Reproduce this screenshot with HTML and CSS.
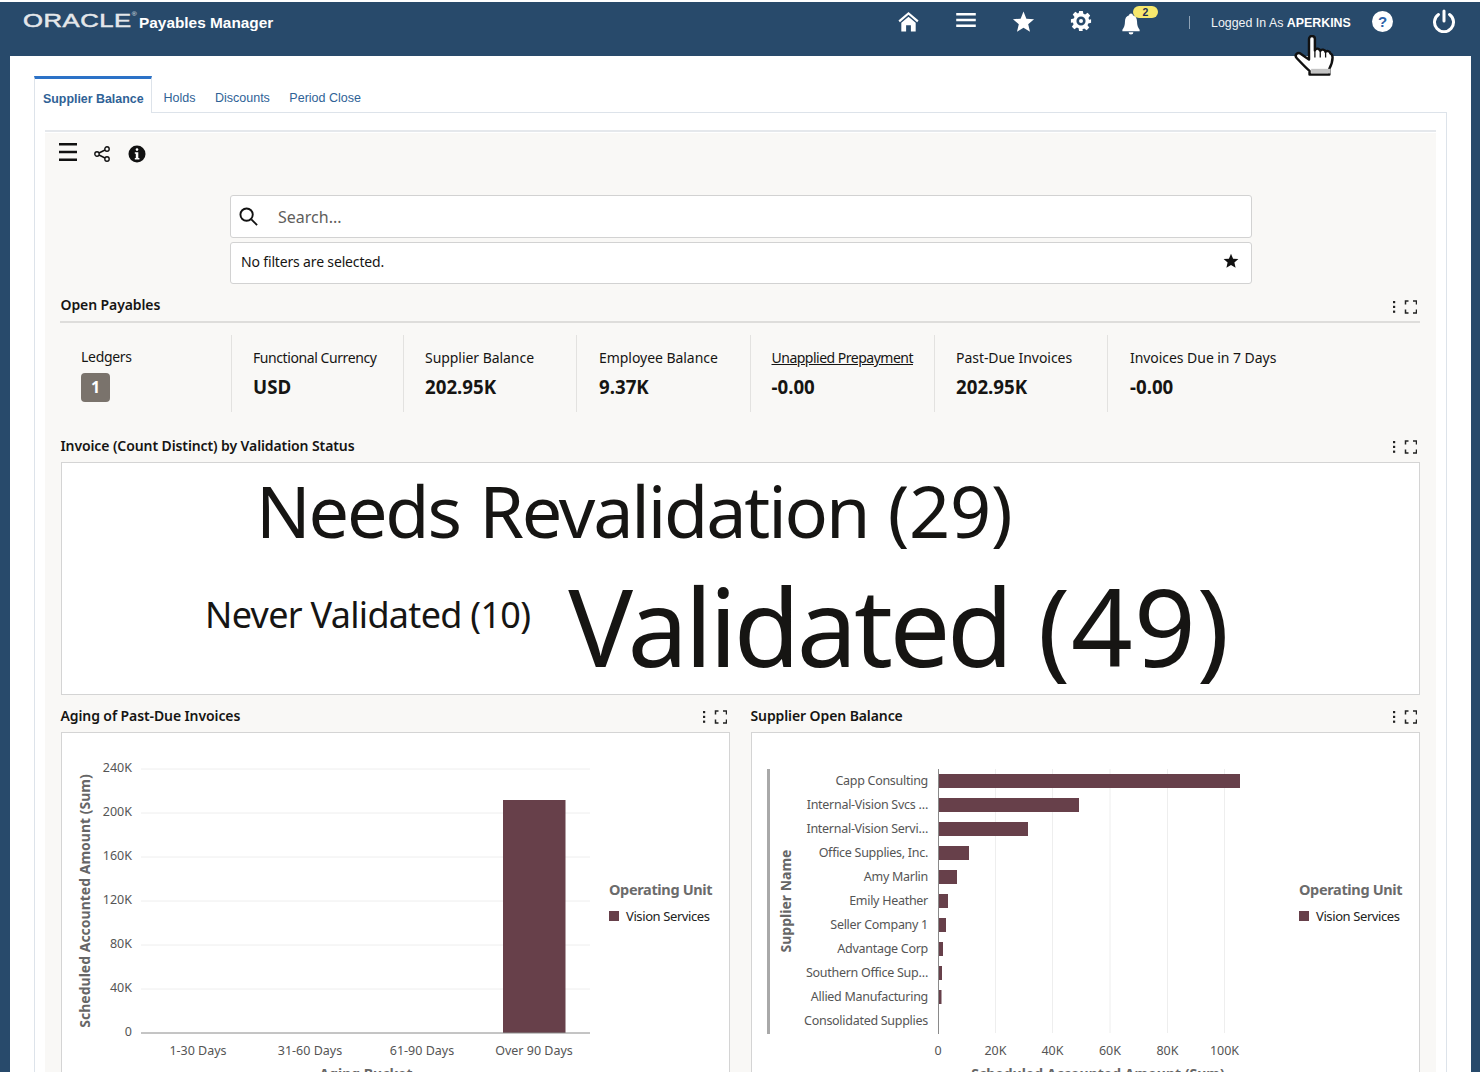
FILE: index.html
```html
<!DOCTYPE html>
<html lang="en">
<head>
<meta charset="utf-8">
<title>Payables Manager</title>
<link rel="stylesheet" href="styles.css">
</head>
<body>
<svg class="defs" width="0" height="0" aria-hidden="true">
  <symbol id="acts" viewBox="0 0 26 14">
    <g fill="#222"><rect x="2" y="1" width="2.200" height="2.200"/><rect x="2" y="5.800" width="2.200" height="2.200"/><rect x="2" y="10.600" width="2.200" height="2.200"/></g>
    <path d="M14.500 4.500V1h3M22 1h3.500v3.500M25.500 9.500V13H22M17.500 13h-3V9.500" fill="none" stroke="#222" stroke-width="1.500"/>
  </symbol>
</svg>
<header class="topbar">
  <div class="brand">
    <span class="logo">ORACLE<sup class="reg">®</sup></span>
    <span class="product">Payables Manager</span>
  </div>
  <nav class="tools">
    <svg class="ic i-home" viewBox="0 0 24 24"><path d="M1.500 11.500 12 2.500l10.500 9-1.500 1.700L12 5.500 3 13.200z" fill="#fff"/><path d="M4.500 13.800 12 7.500l7.500 6.300V23h-5v-6.500h-5V23h-5z" fill="#fff"/></svg>
    <svg class="ic i-menu" viewBox="0 0 24 18"><path d="M1 1h22v3H1zM1 7.500h22v3H1zM1 14h22v3H1z" fill="#fff"/></svg>
    <svg class="ic i-star" viewBox="0 0 24 24"><path d="m12 1.500 3 7.500 8 .6-6.100 5.200 1.900 7.900L12 18.400l-6.800 4.300 1.900-7.900L1 9.600l8-.6z" fill="#fff"/></svg>
    <svg class="ic i-gear" viewBox="0 0 24 24"><path fill="#fff" fill-rule="evenodd" d="M10 1h4l.6 3.200 1.900.8 2.700-1.900 2.800 2.800-1.900 2.700.8 1.900L23 10v4l-3.100.6-.8 1.900 1.900 2.700-2.800 2.800-2.700-1.900-1.900.8L13.900 23h-4l-.5-3.100-1.900-.8-2.700 1.900-2.800-2.800 1.900-2.700-.8-1.900L1 14v-4l3.100-.6.800-1.900L3 4.800 5.800 2l2.700 1.900 1-.6zM12 7a5 5 0 1 0 0 10 5 5 0 0 0 0-10z"/><circle cx="12" cy="12" r="2.200" fill="#fff"/></svg>
    <div class="bell">
      <svg class="ic i-bell" viewBox="0 0 20 24"><path d="M10 1.500c1.300 0 2 .9 2 2 3 .9 4.300 3.500 4.300 6.500 0 4 .9 6.500 2.700 8.500v1.500H1v-1.500C2.800 16.500 3.700 14 3.700 10c0-3 1.300-5.600 4.300-6.500 0-1.100.7-2 2-2zM7.500 21h5a2.500 2.500 0 0 1-5 0z" fill="#fff"/></svg>
      <span class="badge">2</span>
    </div>
    <span class="sep"></span>
    <span class="who">Logged In As <b>APERKINS</b></span>
    <span class="help">?</span>
    <svg class="ic i-power" viewBox="0 0 24 24"><path d="M12 2v10" stroke="#fff" stroke-width="3" stroke-linecap="round" fill="none"/><path d="M6.500 5.500a9.500 9.500 0 1 0 11 0" stroke="#fff" stroke-width="3" fill="none" stroke-linecap="round"/></svg>
  </nav>
  <svg class="hand" viewBox="0 0 42 40" preserveAspectRatio="none"><path d="M14 4c0-4 5.500-4 5.500 0v11c1-2.500 4.500-2 5 .5 1-2 4.500-1.500 5 1 1-1.600 4-1 4.500 1.500 1 .5 2 1.500 2 4 0 5-1.500 8-3 11v5.500H14.500v-3.500C11 32 7.500 28 2.500 22.500c-2.500-3 1-6.500 4-4L14 24z" fill="#fff" stroke="#111" stroke-width="2.300" stroke-linejoin="round"/><path d="M19.500 15v7M24.500 16v6M29.500 17v5" stroke="#111" stroke-width="1.200"/><path d="M16 33h18v4.500H16z" fill="#c4c4c4"/></svg>
</header>

<div class="frame">
<main class="sheet">
  <div class="tabs">
    <a class="tab on">Supplier Balance</a>
    <a class="tab">Holds</a>
    <a class="tab">Discounts</a>
    <a class="tab">Period Close</a>
  </div>
  <div class="panel">
    <div class="topline"></div>
    <div class="canvas">
      <div class="toolbar">
        <svg class="t-menu" viewBox="0 0 18 18"><path d="M0 0h18v2.400H0zM0 7.800h18v2.400H0zM0 15.600h18V18H0z" fill="#111"/></svg>
        <svg class="t-share" viewBox="0 0 16 16" fill="none" stroke="#111" stroke-width="1.400"><circle cx="3" cy="8" r="2.200"/><circle cx="13" cy="3" r="2.200"/><circle cx="13" cy="13" r="2.200"/><path d="m5 7 6-3M5 9l6 3"/></svg>
        <svg class="t-info" viewBox="0 0 18 18"><circle cx="9" cy="9" r="8.500" fill="#111"/><rect x="7.700" y="3.300" width="2.600" height="2.600" rx="1.300" fill="#fff"/><path d="M6.800 7.300h3.500v5.600h1.100v1.500H6.800v-1.500h1v-4.100h-1z" fill="#fff"/></svg>
      </div>
      <div class="filters">
        <div class="field search">
          <svg class="s-ic" viewBox="0 0 20 20" fill="none" stroke="#111" stroke-width="2"><circle cx="8" cy="8" r="6.500"/><path d="m13 13 6 6"/></svg>
          <span class="ph">Search...</span>
        </div>
        <div class="field filt">
          <span>No filters are selected.</span>
          <svg class="f-star" viewBox="0 0 16 16"><path d="m8 .8 2.100 4.900 5.300.4-4 3.500 1.200 5.200L8 12l-4.600 2.800 1.200-5.200-4-3.500 5.300-.4z" fill="#111"/></svg>
        </div>
      </div>

      <div class="sechead ruled">
        <h2>Open Payables</h2>
        <svg class="acts"><use href="#acts"/></svg>
      </div>
      <div class="kpis">
        <div class="kpi k1"><div class="lab up">Ledgers</div><div class="count">1</div></div>
        <div class="kpi k2"><div class="lab">Functional Currency</div><div class="val">USD</div></div>
        <div class="kpi k3"><div class="lab">Supplier Balance</div><div class="val">202.95K</div></div>
        <div class="kpi k4"><div class="lab">Employee Balance</div><div class="val">9.37K</div></div>
        <div class="kpi k5"><div class="lab link">Unapplied Prepayment</div><div class="val">-0.00</div></div>
        <div class="kpi k6"><div class="lab">Past-Due Invoices</div><div class="val">202.95K</div></div>
        <div class="kpi k7"><div class="lab">Invoices Due in 7 Days</div><div class="val">-0.00</div></div>
      </div>

      <div class="sechead">
        <h2>Invoice (Count Distinct) by Validation Status</h2>
        <svg class="acts"><use href="#acts"/></svg>
      </div>
      <div class="cloud">
        <div class="c-row r1"><span class="c-a">Needs Revalidation <span class="c-n">(29)</span></span></div>
        <div class="c-row r2"><span class="c-b">Never Validated (10)</span><span class="c-c">Validated <span class="c-n">(49)</span></span></div>
      </div>

      <div class="charts">
        <section class="chartcol">
          <div class="sechead">
            <h2>Aging of Past-Due Invoices</h2>
            <svg class="acts"><use href="#acts"/></svg>
          </div>
          <div class="chartbox">
            <svg class="chart" viewBox="62 733 667 349">
              <g class="grid">
                <path d="M141 769H590M141 813H590M141 857H590M141 901H590M141 945H590M141 989H590"/>
              </g>
              <rect class="bar" x="503" y="800" width="62.500" height="233"/>
              <path class="axis" d="M141 1033H590"/>
              <g class="tick end">
                <text x="132" y="772">240K</text><text x="132" y="816">200K</text><text x="132" y="860">160K</text><text x="132" y="904">120K</text><text x="132" y="948">80K</text><text x="132" y="992">40K</text><text x="132" y="1036">0</text>
              </g>
              <g class="tick mid">
                <text x="198" y="1055">1-30 Days</text><text x="310" y="1055">31-60 Days</text><text x="422" y="1055">61-90 Days</text><text x="534" y="1055">Over 90 Days</text>
              </g>
              <text class="atitle mid" transform="translate(90 901) rotate(-90)">Scheduled Accounted Amount (Sum)</text>
              <text class="atitle mid" x="366" y="1079">Aging Bucket</text>
              <text class="ltitle" x="609" y="895">Operating Unit</text>
              <rect class="bar" x="609" y="911" width="10" height="10"/>
              <text class="ltext" x="626" y="921">Vision Services</text>
            </svg>
          </div>
        </section>
        <section class="chartcol">
          <div class="sechead">
            <h2>Supplier Open Balance</h2>
            <svg class="acts"><use href="#acts"/></svg>
          </div>
          <div class="chartbox">
            <svg class="chart" viewBox="752 733 667 349">
              <path class="grid" d="M995.500 769V1033M1052.500 769V1033M1110 769V1033M1167.500 769V1033M1224.500 769V1033"/>
              <rect class="spine" x="767" y="769" width="3" height="265"/>
              <path class="axis" d="M938.500 769V1034"/>
              <g class="bars">
                <rect class="bar" x="939" y="774" width="301" height="14"/>
                <rect class="bar" x="939" y="798" width="140" height="14"/>
                <rect class="bar" x="939" y="822" width="89" height="14"/>
                <rect class="bar" x="939" y="846" width="30" height="14"/>
                <rect class="bar" x="939" y="870" width="18" height="14"/>
                <rect class="bar" x="939" y="894" width="9" height="14"/>
                <rect class="bar" x="939" y="918" width="7" height="14"/>
                <rect class="bar" x="939" y="942" width="4" height="14"/>
                <rect class="bar" x="939" y="966" width="3" height="14"/>
                <rect class="bar" x="939" y="990" width="2.500" height="14"/>
              </g>
              <g class="tick end names">
                <text x="928" y="784.500">Capp Consulting</text><text x="928" y="808.500">Internal-Vision Svcs …</text><text x="928" y="832.500">Internal-Vision Servi…</text><text x="928" y="856.500">Office Supplies, Inc.</text><text x="928" y="880.500">Amy Marlin</text><text x="928" y="904.500">Emily Heather</text><text x="928" y="928.500">Seller Company 1</text><text x="928" y="952.500">Advantage Corp</text><text x="928" y="976.500">Southern Office Sup…</text><text x="928" y="1000.500">Allied Manufacturing</text><text x="928" y="1024.500">Consolidated Supplies</text>
              </g>
              <g class="tick mid">
                <text x="938" y="1055">0</text><text x="995.500" y="1055">20K</text><text x="1052.500" y="1055">40K</text><text x="1110" y="1055">60K</text><text x="1167.500" y="1055">80K</text><text x="1224.500" y="1055">100K</text>
              </g>
              <text class="atitle mid" transform="translate(791 901) rotate(-90)">Supplier Name</text>
              <text class="atitle mid" x="1098" y="1079">Scheduled Accounted Amount (Sum)</text>
              <text class="ltitle" x="1299" y="895">Operating Unit</text>
              <rect class="bar" x="1299" y="911" width="10" height="10"/>
              <text class="ltext" x="1316" y="921">Vision Services</text>
            </svg>
          </div>
        </section>
      </div>
    </div>
  </div>
</main>
</div>
</body>
</html>
```

FILE: styles.css
```css
* { box-sizing: border-box; }
html, body { margin: 0; height: 1072px; overflow: hidden; background: #fff; }
body { padding-top: 2px; font-family: "Noto Sans", "Open Sans", sans-serif; color: #161513; }
.defs { position: absolute; }

/* header */
.topbar { position: relative; height: 54px; background: #284a6b; display: flex; align-items: flex-start; font-family: "Liberation Sans", Arial, sans-serif; color: #fff; }
.brand { display: flex; align-items: flex-start; padding: 9px 0 0 23px; }
.logo { display: block; width: 116px; font-size: 19px; line-height: 20px; letter-spacing: .4px; color: #e4e7ea; -webkit-text-stroke: .5px #e4e7ea; transform: scaleX(1.35); transform-origin: left center; white-space: nowrap; }
.reg { font-size: 5px; line-height: 0; vertical-align: 11px; -webkit-text-stroke: 0; }
.product { font-size: 15.400px; font-weight: 700; line-height: 20px; margin-top: 2px; }
.tools { position: absolute; left: 0; right: 0; top: 0; height: 40px; }
.tools > * { position: absolute; }
.ic { display: block; }
.i-home { left: 897px; top: 7px; width: 23px; height: 24px; }
.i-menu { left: 955px; top: 10px; width: 22px; height: 16px; }
.i-star { left: 1012px; top: 8px; width: 23px; height: 23px; }
.i-gear { left: 1070px; top: 8px; width: 22px; height: 22px; }
.bell { left: 1121px; top: 4px; width: 40px; height: 30px; }
.i-bell { position: absolute; left: 0; top: 6px; width: 20px; height: 23px; }
.badge { position: absolute; left: 12px; top: 0; width: 25px; height: 12px; border-radius: 6px; background: #f7e86d; color: #1f2f55; font-size: 10.500px; font-weight: 700; line-height: 12px; text-align: center; }
.sep { left: 1189px; top: 14px; width: 1px; height: 13px; background: #8fa3b6; }
.who { left: 1211px; top: 13px; font-size: 12.400px; line-height: 16px; color: #f1f3f5; white-space: nowrap; }
.who b { color: #fff; }
.help { left: 1372px; top: 9px; width: 21px; height: 21px; border-radius: 50%; background: #fff; color: #2c62a8; font-size: 15px; font-weight: 700; line-height: 21px; text-align: center; }
.i-power { left: 1432px; top: 7px; width: 24px; height: 24px; }
.hand { position: absolute; left: 1294px; top: 33px; width: 45px; height: 41px; z-index: 5; }

/* frame */
.frame { background: #284a6b; padding: 0 9px 0 10px; height: 1016px; overflow: hidden; }
.sheet { background: #fff; height: 100%; padding: 20px 24px 0; }
.tabs { display: flex; align-items: flex-end; height: 37px; font-family: "Liberation Sans", Arial, sans-serif; font-size: 12.500px; color: #2f6296; }
.tab { display: block; height: 36px; padding: 13px 0 0; margin-left: 19.500px; white-space: nowrap; line-height: 16px; }
.tab.on { height: 37px; margin: 0 -8px 0 0; width: 118px; padding: 12px 0 0 8px; border-top: 3px solid #2c72c7; border-left: 1px solid #dde3ea; border-right: 1px solid #dde3ea; background: #fff; font-size: 12.400px; font-weight: 700; position: relative; z-index: 1; }
.panel { border: 1px solid #dde3ea; border-bottom: 0; margin-top: -1px; padding: 17px 10px 0; height: 1000px; }
.topline { height: 2px; background: #e5e8ec; }
.canvas { margin-top: 1px; height: 960px; background: #f9f8f6; padding: 0 16px 0 15px; }

.toolbar { position: relative; height: 62px; display: flex; align-items: flex-start; padding-top: 10px; }
.t-menu { width: 18px; height: 18px; margin-left: -1px; }
.t-share { width: 16px; height: 16px; margin: 3px 0 0 17px; }
.t-info { width: 18px; height: 18px; margin: 2px 0 0 18px; }

.filters { margin-left: 170px; width: 1022px; display: flex; flex-direction: column; gap: 4px; }
.field { display: flex; align-items: center; background: #fff; border: 1px solid #d2d2d2; border-radius: 3px; }
.search { height: 43px; padding-left: 8px; }
.s-ic { width: 19px; height: 19px; margin-top: -1px; }
.ph { margin-left: 20px; font-size: 16px; color: #5f5e5c; }
.filt { height: 42px; padding: 0 12px 4px 10px; justify-content: space-between; font-size: 14px; letter-spacing: -.16px; }
.f-star { width: 16px; height: 16px; }

.sechead { height: 26px; display: flex; justify-content: space-between; align-items: flex-start; }
.sechead h2 { margin: 1px 0 0 .5px; font-size: 14px; font-weight: 600; letter-spacing: -.1px; line-height: 18px; }
.acts { width: 26px; height: 14px; margin-top: 4px; margin-right: 3px; flex: none; }
.ruled { margin-top: 11px; height: 28px; border-bottom: 2px solid #dedddb; }
.ruled .acts { margin-top: 5px; }

.kpis { display: grid; grid-template-columns: 172px 172px 173px 174px 184px 173px 1fr; margin-top: 12px; height: 78px; }
.kpi { padding: 14px 0 0 21px; border-right: 1px solid #e3e2e0; height: 77px; }
.k7, .k4 { padding-left: 22px; }
.k5 { padding-left: 20.500px; }
.k7 { border-right: 0; }
.lab { font-size: 14px; line-height: 18px; letter-spacing: -.05px; }
.k1 { padding-top: 13px; }
.k1 .lab { letter-spacing: -.3px; }
.k2 .lab { letter-spacing: -.42px; }
.k5 .lab { letter-spacing: -.5px; }
.link { text-decoration: underline; }
.val { margin-top: 8px; font-size: 18.700px; font-weight: 700; line-height: 24px; }
.count { margin-top: 7px; width: 29px; height: 29px; border-radius: 4px; background: #7a736c; color: #fff; font-weight: 700; font-size: 16px; line-height: 29px; text-align: center; }

.kpis + .sechead { margin-top: 23px; }
.cloud { margin-left: 1px; height: 233px; background: #fff; border: 1px solid #d4d4d4; white-space: nowrap; }
.c-row { display: flex; align-items: flex-start; }
.r1 { padding-left: 194px; height: 103px; }
.r2 { padding-left: 143px; }
.c-a { font-size: 72px; line-height: 94px; letter-spacing: -2.200px; word-spacing: 3px; }
.c-a .c-n { letter-spacing: -.2px; }
.c-b { font-size: 36px; line-height: 49px; letter-spacing: -.7px; margin: 24px 38px 0 0; }
.c-c { font-size: 108px; line-height: 120px; letter-spacing: -3.400px; word-spacing: 3px; }
.c-c .c-n { letter-spacing: 1px; }

.charts { display: grid; grid-template-columns: 670px 670px; gap: 20px; margin-top: 11px; }
.chartbox { margin-left: 1px; height: 420px; background: #fff; border: 1px solid #d4d4d4; }
.chart { display: block; width: 667px; height: 349px; overflow: hidden; }
.grid { stroke: #eeeeee; stroke-width: 1; fill: none; }
.axis { stroke: #8a8a8a; stroke-width: 1; fill: none; }
.bar { fill: #67404a; }
.spine { fill: #a9a9a9; }
.tick text { font-size: 12.500px; fill: #555; }
.names text { letter-spacing: -.28px; }
.end text { text-anchor: end; }
.mid text, text.mid { text-anchor: middle; }
.atitle { font-size: 14px; font-weight: 700; fill: #666; }
.ltitle { font-size: 14.500px; font-weight: 700; letter-spacing: -.35px; fill: #6b6b6b; }
.ltext { font-size: 13px; letter-spacing: -.4px; fill: #222; }
```
